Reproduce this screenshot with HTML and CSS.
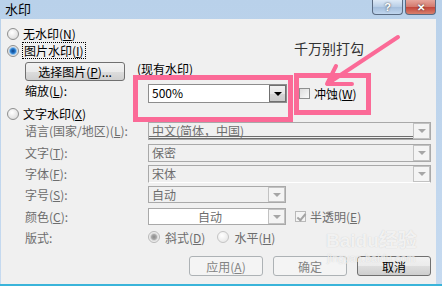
FILE: index.html
```html
<!doctype html>
<html lang="zh">
<head>
  <meta charset="utf-8">
  <meta name="viewport" content="width=device-width, initial-scale=1.0">
  <title>水印</title>
  <link rel="stylesheet" href="styles.css">
</head>
<body>
  <div class="window">
    <div class="titlebar">
      <span class="title">水印</span>
      <div class="caption-buttons">
        <span class="cap-btn help">?</span>
        <span class="cap-btn close">✕</span>
      </div>
    </div>

    <div class="client">
      <div class="opt first"><span class="radio"></span>无水印(<u>N</u>)</div>
      <div class="opt"><span class="radio on"></span><span class="focus">图片水印(<u>I</u>)</span></div>

      <div class="sub pick-row">
        <span class="btn pick">选择图片(<u>P</u>)...</span>
        <span class="current">(现有水印)</span>
      </div>

      <div class="sub scale-row">
        <span class="label">缩放(<u>L</u>):</span>
        <div class="combo active">
          <span class="value">500%</span>
          <span class="drop"><i class="tri"></i></span>
        </div>
        <span class="check washout"></span>
        <span class="check-text">冲蚀(<u>W</u>)</span>
      </div>

      <div class="opt text-opt"><span class="radio"></span>文字水印(<u>X</u>)</div>

      <div class="sub fields">
        <span class="label dim">语言(国家/地区)(<u>L</u>):</span>
        <div class="combo wide lang">
          <span class="value">中文(简体，中国)</span>
          <span class="drop"><i class="tri"></i></span>
        </div>

        <span class="label dim">文字(<u>T</u>):</span>
        <div class="combo wide">
          <span class="value">保密</span>
          <span class="drop"><i class="tri"></i></span>
        </div>

        <span class="label dim">字体(<u>F</u>):</span>
        <div class="combo wide font">
          <span class="value">宋体</span>
          <span class="drop"><i class="tri"></i></span>
        </div>

        <span class="label dim">字号(<u>S</u>):</span>
        <div class="combo narrow">
          <span class="value">自动</span>
          <span class="drop"><i class="tri"></i></span>
        </div>

        <span class="label dim">颜色(<u>C</u>):</span>
        <div class="color-row">
          <div class="combo narrow color">
            <span class="value center">自动</span>
            <span class="drop"><i class="tri"></i></span>
          </div>
          <span class="check checked"></span>
          <span class="check-text dim">半透明(<u>E</u>)</span>
        </div>

        <span class="label dim">版式:</span>
        <div class="layout-row">
          <span class="radio on-dim"></span><span class="dim">斜式(<u>D</u>)</span>
          <span class="radio off-dim"></span><span class="dim">水平(<u>H</u>)</span>
        </div>
      </div>

      <div class="actions">
        <span class="btn disabled">应用(<u>A</u>)</span>
        <span class="btn disabled">确定</span>
        <span class="btn">取消</span>
      </div>
    </div>

    <!-- annotations drawn over the screenshot -->
    <div class="mark mark-scale"></div>
    <div class="mark mark-wash"></div>
    <span class="note">千万别打勾</span>
    <svg class="arrow" width="442" height="286" viewBox="0 0 442 286">
      <path d="M398 37 L330 82 M336 66 L327 84 L352 84" fill="none" stroke="#fb6a97" stroke-width="4" stroke-linecap="round" stroke-linejoin="round"/>
    </svg>
    <div class="stamp">
      <span class="stamp-logo">Bai<b>du</b>经验</span>
      <span class="stamp-url">jingyan.baidu.com</span>
    </div>
  </div>
</body>
</html>
```

FILE: styles.css
```css
:root {
  --face: #f0f0f0;
  --dim: #6d6d6d;
  --pink: #fb6a97;
  --frame: #c3d8ee;
}

* {
  margin: 0;
  padding: 0;
  box-sizing: border-box;
}

body {
  font-family: "Noto Sans CJK SC", "Liberation Sans", sans-serif;
  font-size: 12px;
  color: #000;
  background: var(--frame);
}

u {
  text-decoration: underline;
  text-underline-offset: 1px;
}

.window {
  position: relative;
  width: 442px;
  height: 286px;
  display: flex;
  flex-direction: column;
  background: linear-gradient(#b9d1ea, #c6daf0);
  border-bottom: 2px solid #3ab4da;
  overflow: hidden;
}

.titlebar {
  height: 19px;
  display: flex;
  justify-content: space-between;
  align-items: flex-start;
}

.title {
  padding-left: 5px;
  font-size: 13px;
  line-height: 18px;
}

.caption-buttons {
  display: flex;
  gap: 2px;
  margin-right: 6px;
}

.cap-btn {
  width: 31px;
  height: 15px;
  display: flex;
  justify-content: center;
  align-items: center;
  border: 1px solid #5a6b82;
  border-top: none;
  border-radius: 0 0 4px 4px;
  color: #fff;
  font-family: "Liberation Sans", sans-serif;
  font-weight: bold;
  font-size: 11px;
  text-shadow: 0 0 2px #333;
}

.help {
  background: linear-gradient(#dde9f6, #b7cde6 50%, #a4bedc 51%, #c0d6ee);
}

.close {
  background: linear-gradient(#e6a59b, #d3786c 50%, #c2453a 51%, #d8806c);
  font-size: 10px;
}

.client {
  flex: 1;
  margin: 0 6px 0 1px;
  padding: 6px 5px 0 6px;
  background: var(--face);
  display: flex;
  flex-direction: column;
}

.opt {
  height: 17px;
  display: flex;
  align-items: center;
}

.radio {
  width: 12px;
  height: 12px;
  margin-right: 4px;
  border: 1px solid #8e8f8f;
  border-radius: 50%;
  background: radial-gradient(circle at 40% 35%, #ffffff, #d4d4d4);
  flex: none;
}

.radio.on {
  background: radial-gradient(circle, #0c3f86 0, #2b7fd0 2.5px, #8fc1ee 3.5px, #e3e3e3 4.5px, #f6f6f6 6px);
}

.radio.on-dim {
  border-color: #b8b8b8;
  background: radial-gradient(circle, #8a8a8a 0, #a9a9a9 2.5px, #d6d6d6 3.5px, #ececec 4.5px, #f6f6f6 6px);
}

.radio.off-dim {
  border-color: #c4c4c4;
  background: radial-gradient(circle at 40% 35%, #ffffff, #e2e2e2);
}

.focus {
  outline: 1px dotted #000;
  outline-offset: 0;
  padding: 0 1px;
  line-height: 15px;
}

.sub {
  padding-left: 18px;
}

.pick-row {
  margin-top: 2px;
  height: 20px;
  display: flex;
  align-items: center;
}

.btn {
  width: 74px;
  height: 20px;
  display: flex;
  justify-content: center;
  align-items: center;
  border: 1px solid #707070;
  border-radius: 3px;
  background: linear-gradient(#f2f2f2, #ebebeb 50%, #dddddd 51%, #cfcfcf);
}

.btn.pick {
  width: 100px;
  height: 19px;
}

.btn.disabled {
  border-color: #adb2b5;
  background: #f4f4f4;
  color: #838383;
}

.current {
  margin-left: 12px;
  align-self: flex-start;
  line-height: 14px;
  margin-top: 1px;
}

.scale-row {
  margin-top: 3px;
  height: 19px;
  display: flex;
  align-items: center;
}

.label {
  width: 123px;
  flex: none;
  line-height: 18px;
}

.scale-row .label {
  align-self: flex-start;
  line-height: 14px;
}

.dim {
  color: var(--dim);
}

.combo {
  height: 18px;
  display: flex;
  border: 1px solid #a9a9a9;
  background: var(--face);
  color: var(--dim);
}

.combo .value {
  flex: 1;
  padding-left: 3px;
  line-height: 16px;
}

.combo .value.center {
  text-align: center;
}

.combo .drop {
  width: 17px;
  display: flex;
  justify-content: center;
  align-items: center;
  border: 1px solid #c2c2c2;
  background: #f4f4f4;
}

.tri {
  width: 0;
  height: 0;
  border-left: 4px solid transparent;
  border-right: 4px solid transparent;
  border-top: 4px solid #a6a6a6;
}

.combo.active {
  width: 139px;
  height: 19px;
  border-color: #8d8d8d;
  background: #fff;
  color: #000;
}

.combo.active .drop {
  border-color: #707070;
  background: linear-gradient(#f2f2f2, #e6e6e6 50%, #d6d6d6 51%, #cbcbcb);
}

.combo.active .tri {
  border-top-color: #000;
}

.check {
  width: 11px;
  height: 11px;
  flex: none;
  border: 1px solid #8e8f8f;
  background: linear-gradient(135deg, #dcdcdc, #fafafa);
}

.check.washout {
  margin-left: 12px;
}

.check-text {
  margin-left: 4px;
}

.check.checked {
  margin-left: 9px;
  border-color: #b9b9b9;
  background: #f4f4f4;
  position: relative;
}

.check.checked::after {
  content: "";
  position: absolute;
  left: 3px;
  top: 0;
  width: 3px;
  height: 7px;
  border: solid #a4a4a4;
  border-width: 0 2px 2px 0;
  transform: rotate(40deg);
}

.text-opt {
  margin-top: 2px;
}

.fields {
  display: grid;
  grid-template-columns: 123px 283px;
  grid-template-rows: 22px 21px 21px 22px 21px 18px;
  align-items: start;
}

.combo.wide {
  width: 283px;
}

.combo.narrow {
  width: 138px;
  height: 17px;
}

.combo.lang .value {
  border-bottom: 3px double #6d6d6d;
}

.combo.font {
  border-bottom-color: #fff;
}

.combo.color {
  background: #fff;
}

.color-row,
.layout-row {
  display: flex;
  align-items: center;
}

.color-row {
  height: 17px;
}

.layout-row {
  height: 16px;
}

.layout-row .radio {
  margin-right: 5px;
}

.layout-row .off-dim {
  margin-left: 12px;
}

.actions {
  margin-top: 9px;
  display: flex;
  justify-content: flex-end;
  gap: 10px;
}

/* annotations laid over the dialog */
.mark {
  position: absolute;
  border: 5px solid var(--pink);
}

.mark-scale {
  left: 133px;
  top: 75px;
  width: 160px;
  height: 47px;
}

.mark-wash {
  left: 294px;
  top: 73px;
  width: 77px;
  height: 42px;
}

.note {
  position: absolute;
  left: 294px;
  top: 38px;
  font-size: 14px;
  color: #333;
}

.arrow {
  position: absolute;
  left: 0;
  top: 0;
}

.stamp {
  position: absolute;
  left: 326px;
  top: 230px;
  display: flex;
  flex-direction: column;
  align-items: center;
  color: rgba(255, 255, 255, 0.75);
  text-shadow: 0 0 1px rgba(120, 120, 120, 0.35);
}

.stamp-logo {
  font-family: "Liberation Sans", "Noto Sans CJK SC", sans-serif;
  font-size: 19px;
  font-weight: bold;
  line-height: 22px;
}

.stamp-url {
  font-family: "Liberation Sans", sans-serif;
  font-size: 11px;
  line-height: 12px;
}
```
